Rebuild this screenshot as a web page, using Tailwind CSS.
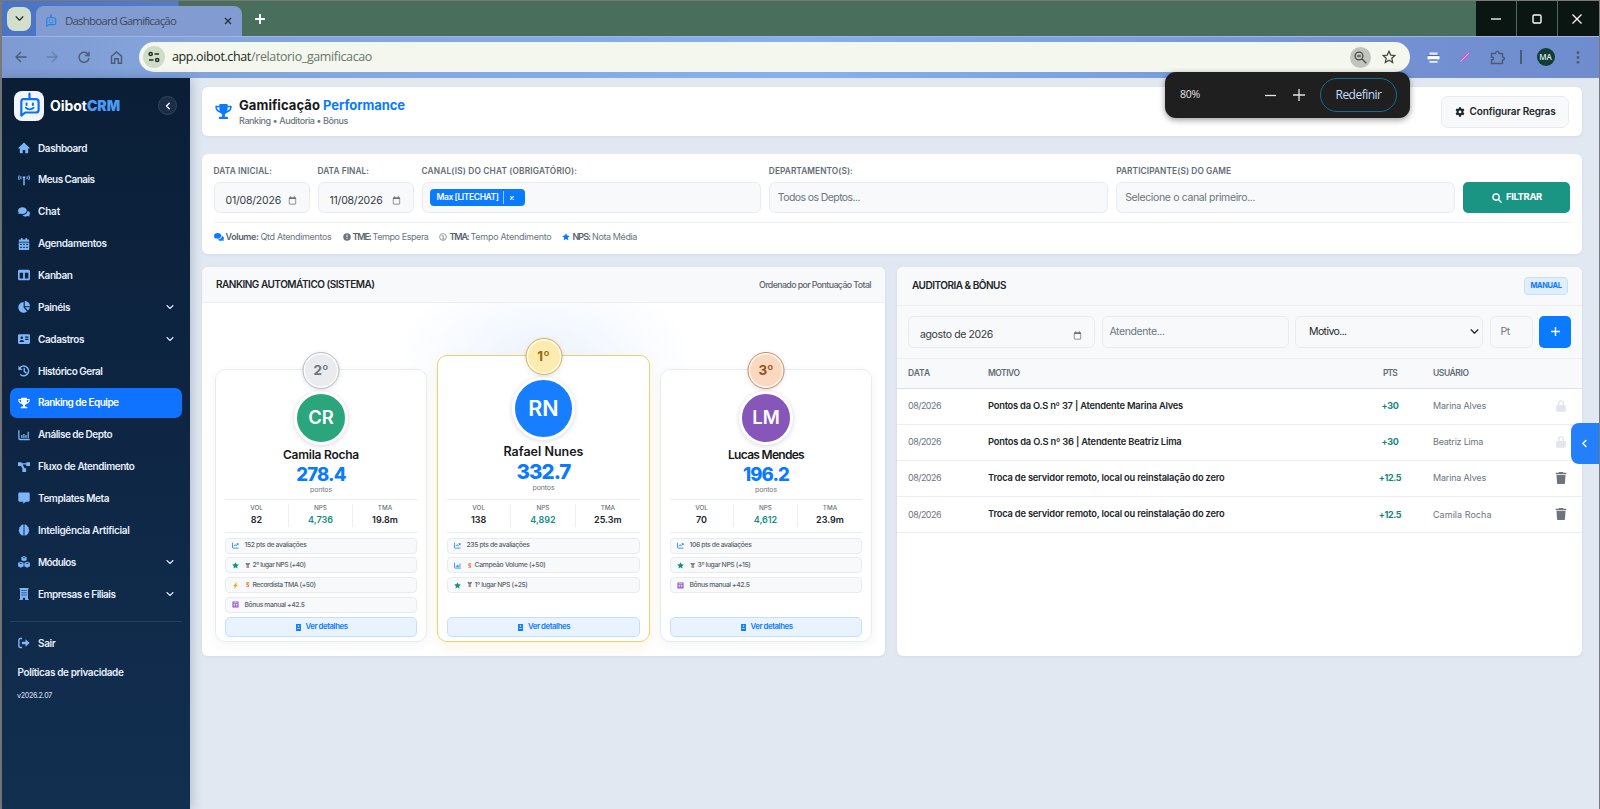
<!DOCTYPE html>
<html lang="pt-BR">
<head>
<meta charset="utf-8">
<title>Dashboard Gamificação</title>
<script src="https://cdn.jsdelivr.net/npm/@tailwindcss/browser@4"></script>
</head>
<body class="h-[809px] w-[1600px] overflow-hidden bg-[#77797b] font-['Inter','Liberation_Sans',sans-serif] text-[#212529]">

<svg class="hidden" aria-hidden="true">
  <symbol id="home" viewBox="0 0 16 16"><path d="M8 .8 .6 7.6c-.5.5-.2 1.1.5 1.1h1.3v5.2c0 .7.4 1.1 1.1 1.1H6.300v-4.200h3.400V15h2.800c.7 0 1.100-.4 1.100-1.100V8.700h1.300c.7 0 1-.6.5-1.100z"/></symbol>
  <symbol id="tower" viewBox="0 0 16 16"><g fill="none" stroke="currentColor" stroke-width="1.500"><path d="M1.800 2C.5 4 .5 6 1.800 8M4.200 3c-.7 1.300-.7 2.700 0 4M14.200 2c1.300 2 1.300 4 0 6M11.800 3c.7 1.300.7 2.700 0 4"/><path d="M8 6v9" stroke-width="2"/></g><circle cx="8" cy="4.800" r="1.800"/></symbol>
  <symbol id="chat" viewBox="0 0 16 16"><path d="M5.900 1.500C2.600 1.500 0 3.600 0 6.200c0 1 .4 2 1.100 2.800-.2.700-.6 1.300-1 1.800.9 0 1.900-.3 2.700-.8.900.5 2 .7 3.100.7 3.200 0 5.800-2 5.800-4.600 0-2.500-2.600-4.600-5.800-4.600z"/><path d="M12.700 6.200c0 3.200-2.900 5.600-6.700 5.700 1 1.300 2.700 2.100 4.600 2.100 1 0 2-.2 2.800-.6.800.4 1.700.7 2.600.6-.4-.5-.8-1.100-1-1.700.6-.7 1-1.600 1-2.500 0-1.600-1.300-3-3.300-3.600z"/></symbol>
  <symbol id="cal" viewBox="0 0 16 16"><path fill-rule="evenodd" d="M4 0h2v2h4V0h2v2h1.500c.8 0 1.500.6 1.500 1.400V5H1V3.400C1 2.600 1.700 2 2.500 2H4zM1 6h14v8.500c0 .8-.7 1.500-1.500 1.500h-11C1.700 16 1 15.300 1 14.500zm2 1.800v1.600h2V7.800zm4 0v1.600h2V7.800zm4 0v1.600h2V7.800zM3 11.700v1.700h2v-1.700zm4 0v1.700h2v-1.700zm4 0v1.700h2v-1.700z"/></symbol>
  <symbol id="kanban" viewBox="0 0 16 16"><path fill-rule="evenodd" d="M2 1h12c1.100 0 2 .9 2 2v10c0 1.100-.9 2-2 2H2c-1.100 0-2-.9-2-2V3c0-1.100.9-2 2-2zm.2 4v7.800h4.600V5zm7 0v7.800h4.600V5z"/></symbol>
  <symbol id="pie" viewBox="0 0 16 16"><path d="M7.500 8.500V1.300C3.600 1.600.5 4.600.5 8.500c0 4 3.200 7 7 7 1.700 0 3.200-.6 4.500-1.600zM9 0v7h7c0-3.900-3.100-7-7-7zM9.300 8.400l4 4.400c1.300-1.100 2.200-2.700 2.400-4.400z"/></symbol>
  <symbol id="idcard" viewBox="0 0 16 16"><path fill-rule="evenodd" d="M1.800 1.500h12.400c1 0 1.800.8 1.800 1.800v9.400c0 1-.8 1.800-1.800 1.800H1.800c-1 0-1.800-.8-1.800-1.800V3.300c0-1 .8-1.800 1.800-1.800zm3.200 3a1.700 1.700 0 1 0 0 3.400 1.700 1.700 0 0 0 0-3.400zM2 12h6c0-1.700-1.100-2.800-3-2.800S2 10.300 2 12zm7.500-7.200v1.400H14V4.800zm0 3v1.400H14V7.800z"/></symbol>
  <symbol id="history" viewBox="0 0 16 16"><path d="M2 4.500A6.500 6.500 0 1 1 3.600 13M8.300 4.500v4l2.500 2" fill="none" stroke="currentColor" stroke-width="1.900" stroke-linecap="round"/><path d="M.6 1v5.600h5.600z"/></symbol>
  <symbol id="trophy" viewBox="0 0 16 16"><path d="M4.200 1h7.600v1.500H15c.5 0 .8.300.8.800 0 3.200-1.900 5.300-5 6-.4.500-.9.900-1.500 1.200V13h2.200c.5 0 .8.300.8.800V15H3.700v-1.200c0-.5.300-.8.800-.8h2.200v-2.500c-.6-.3-1.100-.7-1.500-1.200-3.100-.7-5-2.800-5-6 0-.5.300-.8.800-.8h3.200zM1.800 4c.2 1.700 1 2.800 2.700 3.400-.3-1-.5-2.200-.4-3.400zm12.400 0h-2.300c0 1.200-.1 2.400-.4 3.400 1.700-.6 2.500-1.700 2.700-3.400z"/></symbol>
  <symbol id="chart" viewBox="0 0 16 16"><path d="M1.200 1.500v11c0 .9.500 1.500 1.400 1.500h13" fill="none" stroke="currentColor" stroke-width="1.700"/><path d="M4.200 8h1.700v4H4.200zM7 6.500h1.700V12H7zM9.800 8h1.700v4H9.800zM12.800 3.500h1.700V12h-1.700z"/></symbol>
  <symbol id="line" viewBox="0 0 16 16"><path d="M1.200 1.500v11c0 .9.500 1.500 1.400 1.500H15M4 9.500l3-3.200 2.500 2.300L14 4M10.800 3.800H14V7" fill="none" stroke="currentColor" stroke-width="1.800"/></symbol>
  <symbol id="flow" viewBox="0 0 16 16"><path d="M0 1.500h5v1.600h6V1.500h5v5h-5V4.700H6.200l2.500 4.800h2.100v5h-5v-4.600L4 6.500H0z"/></symbol>
  <symbol id="msg" viewBox="0 0 16 16"><path d="M2 .8h12c.9 0 1.600.7 1.600 1.600v9c0 .9-.7 1.600-1.600 1.600h-3.500L7 15.600V13H2c-.9 0-1.600-.7-1.600-1.600v-9C.4 1.500 1.100.8 2 .8z"/></symbol>
  <symbol id="brain" viewBox="0 0 16 16"><path d="M7.400.8C5.500.3 4 1.500 3.800 3.100 2 3.600 1.300 5 1.800 6.600.6 7.900.8 9.800 1.900 10.800c-.2 1.900 1 3.200 2.400 3.400.8 1.200 2.200 1.400 3.100.8zM8.600.8c1.900-.5 3.400.7 3.600 2.300 1.800.5 2.500 1.900 2 3.500 1.200 1.300 1 3.200-.1 4.200.2 1.900-1 3.200-2.400 3.400-.8 1.200-2.200 1.400-3.100.8z"/></symbol>
  <symbol id="cubes" viewBox="0 0 16 16"><path fill-rule="evenodd" d="M8 0l3.500 1.500v4L8 7.100 4.500 5.500v-4zm0 1.600L6.200 2.400 8 3.200l1.800-.8zM3.800 7.500l3.700 1.600v4.600L3.800 15.600.1 13.700V9.100zm0 1.500-1.900.9 1.900.8 1.900-.8zM12.200 7.500l3.700 1.600v4.600l-3.700 1.900-3.700-1.900V9.100zm0 1.500-1.900.9 1.900.8 1.900-.8z"/></symbol>
  <symbol id="building" viewBox="0 0 16 16"><path fill-rule="evenodd" d="M2 0h12v1.500h-.7v13h.9V16H9.500v-3h-3v3H1.800v-1.500h.9v-13H2zm2.800 2.600v1.500h1.600V2.600zm2.500 0v1.500h1.500V2.600zm2.500 0v1.500h1.600V2.600zm-5 3v1.500h1.600V5.600zm2.500 0v1.500h1.500V5.600zm2.500 0v1.500h1.600V5.600zm-5 3v1.500h1.600V8.600zm2.500 0v1.500h1.500V8.600zm2.500 0v1.500h1.600V8.600z"/></symbol>
  <symbol id="exit" viewBox="0 0 16 16"><path d="M5.500 2H3.200C2 2 1.200 2.800 1.200 4v8c0 1.200.8 2 2 2h2.300" fill="none" stroke="currentColor" stroke-width="1.900"/><path d="M10 3l5.600 5-5.600 5v-3.200H5.200V6.200H10z"/></symbol>
  <symbol id="star" viewBox="0 0 16 16"><path d="M8 .3l2.300 4.800 5.300.7-3.900 3.700 1 5.200L8 12.200l-4.700 2.500 1-5.200L.4 5.800l5.300-.7z"/></symbol>
  <symbol id="gear" viewBox="0 0 16 16"><path fill-rule="evenodd" d="M6.400.4h3.200l.4 2.100 1.300.8 2.100-.8 1.600 2.800-1.600 1.500v1.900l1.600 1.500-1.600 2.800-2.100-.8-1.300.8-.4 2.600H6.400L6 13l-1.300-.8-2.100.8L1 10.200l1.600-1.500V6.800L1 5.300l1.600-2.800 2.100.8L6 2.500zM8 5.500a2.300 2.300 0 1 0 0 4.600 2.300 2.300 0 0 0 0-4.600z"/></symbol>
  <symbol id="search" viewBox="0 0 16 16"><g fill="none" stroke="currentColor" stroke-width="2.200" stroke-linecap="round"><circle cx="6.500" cy="6.500" r="5"/><path d="M10.300 10.300l4.400 4.400"/></g></symbol>
  <symbol id="date" viewBox="0 0 16 16"><path fill-rule="evenodd" d="M4 .5h1.600V2h4.800V.5H12V2h1c.8 0 1.500.7 1.500 1.500v10c0 .8-.7 1.500-1.500 1.500H3c-.8 0-1.500-.7-1.500-1.500v-10C1.500 2.700 2.200 2 3 2h1zM2.800 5.500v8.200h10.400V5.500z"/></symbol>
  <symbol id="down" viewBox="0 0 16 16"><path d="M2 5l6 6 6-6" fill="none" stroke="currentColor" stroke-width="2.300" stroke-linecap="round" stroke-linejoin="round"/></symbol>
  <symbol id="left" viewBox="0 0 16 16"><path d="M10.500 2.500L5 8l5.500 5.500" fill="none" stroke="currentColor" stroke-width="2.600" stroke-linecap="round" stroke-linejoin="round"/></symbol>
  <symbol id="info" viewBox="0 0 16 16"><path fill-rule="evenodd" d="M8 .5a7.500 7.500 0 1 0 0 15 7.500 7.500 0 0 0 0-15zM7 3.500h2v5.200H7zm0 6.500h2v2H7z"/></symbol>
  <symbol id="clock" viewBox="0 0 16 16"><g fill="none" stroke="currentColor" stroke-width="1.400"><circle cx="8" cy="8" r="6.800"/><path d="M5 5.500h3.500V12M6 12h5"/></g></symbol>
  <symbol id="lock" viewBox="0 0 16 16"><path fill-rule="evenodd" d="M4 6.500V4.200a4 4 0 0 1 8 0v2.300h1c.9 0 1.500.6 1.500 1.500v6c0 .9-.6 1.500-1.500 1.500H3c-.9 0-1.500-.6-1.500-1.500V8c0-.9.600-1.500 1.500-1.500zm1.900 0h4.200V4.200a2.100 2.100 0 0 0-4.200 0z"/></symbol>
  <symbol id="trash" viewBox="0 0 16 16"><path d="M5.500 0h5l.6 1H15v2H1V1h3.900zM2 4h12l-.7 10.600c0 .8-.6 1.400-1.400 1.400H4.100c-.8 0-1.400-.6-1.400-1.400z"/></symbol>
  <symbol id="bolt" viewBox="0 0 16 16"><path d="M11.500 0L2.500 9h4L4.500 16l9-9.500h-4z"/></symbol>
  <symbol id="note" viewBox="0 0 16 16"><path fill-rule="evenodd" d="M1 1h14v14H1zm2.500 2.500v1.500h9V3.500zm0 3.500v1.500h3.800V7zm5.200 0v1.500h3.800V7zM3.500 10.500V12h3.800v-1.500zm5.200 0V12h3.800v-1.500z"/></symbol>
  <symbol id="receipt" viewBox="0 0 16 16"><path fill-rule="evenodd" d="M2.500 0h11v16h-11zm4 3v3h3V3zM5 9v1.600h6V9z"/></symbol>
  <symbol id="medal" viewBox="0 0 16 16"><path d="M1 0h5l2 4 2-4h5l-4.500 8h-5z" fill="#3b7ddd"/><path d="M6 0h4L8 4z" fill="#d9534f"/><circle cx="8" cy="11.500" r="4.200" fill="#e08a3c"/></symbol>
  <symbol id="fire" viewBox="0 0 16 16"><path d="M4 1h8v3H7v2.500c3-.5 5 1.300 5 4S10 15.500 7 15.500H4v-3h3c1.300 0 2-.6 2-1.600S8.300 9.300 7 9.300H4z" fill="#f47a35"/></symbol>
  <symbol id="bot" viewBox="0 0 32 32"><path d="M16 2v6" stroke="#0b6cf5" stroke-width="2.600" stroke-linecap="round"/><path d="M8.500 8.500h15c2 0 3.300 1.300 3.300 3.300V21c0 2-1.300 3.300-3.300 3.300H11L6.300 28V11.800c0-2 .7-3.300 2.200-3.300z" fill="none" stroke="currentColor" stroke-width="2.600" stroke-linejoin="round"/><path d="M12.500 13.500v2M20 13.500v2" stroke="currentColor" stroke-width="2.400" stroke-linecap="round"/><path d="M11.500 18.500c2.500 2.800 7 2.800 9.500 0" fill="none" stroke="currentColor" stroke-width="2" stroke-linecap="round"/></symbol>
</svg>

<div class="flex h-full w-full flex-col pt-[1px] pr-[1px] pl-[2px]">

  <!-- Browser tab strip -->
  <header class="relative flex h-[35px] shrink-0 items-stretch bg-[linear-gradient(90deg,#4a74c4_0,#557bc8_176px,#4a6e5c_177px)] font-['Open_Sans','Noto_Sans',sans-serif]">
    <div class="flex w-[34px] items-center pl-[5px]">
      <button class="flex size-6 items-center justify-center rounded-[8px] bg-[#d2e0cb] text-[#26322c]"><svg class="size-[9px]"><use href="#down"/></svg></button>
    </div>
    <div class="mt-[5px] flex w-[206px] items-center rounded-t-[8px] bg-[#829cd2] pl-[8px] text-[#3c4a5e]">
      <svg class="size-[14px] text-[#1c84ea]"><use href="#bot"/></svg>
      <span data-w="111" class="ml-[7px] text-[11.500px]">Dashboard Gamificação</span>
      <svg class="mr-[10px] ml-auto size-[8px] text-[#222c3a]" viewBox="0 0 8 8"><path d="M1 1l6 6M7 1l-6 6" stroke="currentColor" stroke-width="1.200"/></svg>
    </div>
    <svg class="ml-[12px] size-[12px] self-center text-white" viewBox="0 0 12 12"><path d="M6 1v10M1 6h10" stroke="currentColor" stroke-width="1.800"/></svg>
    <div class="ml-auto flex gap-[1px] text-white">
      <div class="flex w-[40px] items-center justify-center bg-[#0b1512]"><svg class="size-[10px]" viewBox="0 0 10 10"><path d="M0 5h10" stroke="currentColor" stroke-width="1.300"/></svg></div>
      <div class="flex w-[40px] items-center justify-center bg-[#0b1512] pr-[1px]"><svg class="size-[10px]" viewBox="0 0 10 10"><rect x="1" y="1" width="8" height="8" rx="1.200" fill="none" stroke="currentColor" stroke-width="1.400"/></svg></div>
      <div class="flex w-[41px] items-center justify-center bg-[#0b1512] pr-[3px]"><svg class="size-[10px]" viewBox="0 0 10 10"><path d="M.5 .5l9 9M9.500 .5l-9 9" stroke="currentColor" stroke-width="1.300"/></svg></div>
    </div>
  </header>

  <!-- Address bar -->
  <div class="relative flex h-[42px] shrink-0 items-center border-t border-[#9fb6e4] bg-[linear-gradient(90deg,#7f9ad2_0,#82a2da_8%,#86b0ee_50%,#7290d2_88%,#6f8ccf_100%)] pb-[1px] font-['Open_Sans','Noto_Sans',sans-serif] text-[#4c5b75]">
    <svg class="ml-[13px] size-[12px]" viewBox="0 0 12 12"><path d="M11.500 6H1M6 1L1 6l5 5" fill="none" stroke="currentColor" stroke-width="1.400"/></svg>
    <svg class="ml-[19px] size-[12px] text-[#6880ae]" viewBox="0 0 12 12"><path d="M.5 6H11M6 1l5 5-5 5" fill="none" stroke="currentColor" stroke-width="1.400"/></svg>
    <svg class="ml-[20px] size-[12px]" viewBox="0 0 12 12"><path d="M10.500 4A5 5 0 1 0 11 6.800M11 .8v3.700H7.200" fill="none" stroke="currentColor" stroke-width="1.400"/></svg>
    <svg class="ml-[20px] size-[13px]" viewBox="0 0 13 13"><path d="M1.500 5.200l5-4.200 5 4.200v7h-3.200V7.800H4.700v4.400H1.500z" fill="none" stroke="currentColor" stroke-width="1.400"/></svg>
    <div class="ml-[16px] flex h-[30px] w-[1271px] items-center rounded-full bg-[#f3f7ee] pl-[4px] text-[#202622]">
      <span class="flex size-[22px] items-center justify-center rounded-full bg-[#cfdcc8]"><svg class="size-[12px]" viewBox="0 0 12 12"><g fill="none" stroke="#26302a" stroke-width="1.500"><circle cx="2.700" cy="3" r="1.600"/><path d="M6.500 3H11M1 9h4.500"/><circle cx="9.200" cy="9" r="1.600"/></g></svg></span>
      <span data-w="200" class="ml-[7px] text-[12.500px] whitespace-pre">app.oibot.chat<i class="text-[#6c746c] not-italic">/relatorio_gamificacao</i></span>
      <span class="ml-auto flex size-[21px] items-center justify-center rounded-full bg-[#c0c3be] text-[#454b46]"><svg class="size-[13px]" viewBox="0 0 13 13"><g fill="none" stroke="currentColor" stroke-width="1.300"><circle cx="5" cy="5" r="3.900"/><path d="M8 8l4.300 4.300M3.200 5h3.600"/></g></svg></span>
      <svg class="mr-[14px] ml-[11px] size-[14px] text-[#3c423e]" viewBox="0 0 16 16"><path d="M8 1.500l2 4.300 4.700.5-3.500 3.200 1 4.700L8 11.800l-4.200 2.400 1-4.700L1.300 6.300 6 5.800z" fill="none" stroke="currentColor" stroke-width="1.400"/></svg>
    </div>
    <svg class="ml-[17px] size-[13px]" viewBox="0 0 13 13"><path d="M2.500 1.500h8v2.300h-8zM2.500 9.500h8v2.300h-8z" fill="#e8effa"/><rect x=".5" y="4.800" width="12" height="3.700" rx="1" fill="#fff"/><path d="M.5 4.600h12M2.500 9h8" stroke="#3f5f9c" stroke-width=".9"/></svg>
    <svg class="ml-[19px] size-[12px]" viewBox="0 0 12 12"><path d="M1 11C2 6 6 2 11.500.8 10 5.500 6.500 9 1 11z" fill="#c060dc"/><path d="M1.500 10.500L10 2" stroke="#f2dcff" stroke-width=".8"/></svg>
    <svg class="ml-[19px] size-[15px]" viewBox="0 0 15 15"><path d="M1.500 3.500h4c0-2.800 3.500-2.800 3.500 0h3.500V7c2.500 0 2.500 3 0 3v3.500h-11V10c2.600 0 2.600-3 0-3z" fill="none" stroke="currentColor" stroke-width="1.400"/></svg>
    <i class="ml-[15px] h-[14px] w-[1.500px] bg-[#4c5b75]"></i>
    <span class="ml-[15px] flex size-[18px] items-center justify-center rounded-full bg-[#123c35] text-[8px] font-semibold text-[#dfeee8]">MA</span>
    <svg class="ml-[21px] h-[13px] w-[4px]" viewBox="0 0 4 13"><g fill="currentColor"><circle cx="2" cy="1.700" r="1.400"/><circle cx="2" cy="6.500" r="1.400"/><circle cx="2" cy="11.300" r="1.400"/></g></svg>

    <!-- Zoom popup -->
    <div class="absolute top-[35px] left-[1163px] z-20 flex h-[46px] w-[245px] items-center rounded-[11px] bg-[#1f1f1f] pl-[15px] text-[#e3e3e3] shadow-[0_2px_6px_rgba(0,0,0,.4)]">
      <span data-w="20" class="text-[10.500px]">80%</span>
      <svg class="ml-[65px] size-[11px]" viewBox="0 0 11 11"><path d="M0 5.500h11" stroke="currentColor" stroke-width="1.300"/></svg>
      <svg class="ml-[17px] size-[12px]" viewBox="0 0 12 12"><path d="M0 6h12M6 0v12" stroke="currentColor" stroke-width="1.300"/></svg>
      <span class="ml-[15px] flex h-[34px] w-[77px] items-center justify-center rounded-full border border-[#146a9a] text-[12px] text-[#c6dcfb]"><span data-w="46">Redefinir</span></span>
    </div>
  </div>

  <div class="flex min-h-0 flex-1">

    <!-- Sidebar -->
    <aside class="z-10 flex w-[188px] shrink-0 flex-col bg-[linear-gradient(180deg,#0a1e36_0%,#0e2644_50%,#122f50_100%)] px-[8px] shadow-[2px_0_10px_rgba(15,35,65,.22)]">
      <div class="flex h-[55px] items-center">
        <span class="ml-[4px] flex size-[30px] items-center justify-center rounded-[8px] bg-[#f2f6fc] text-[#0b72f5]"><svg class="size-[27px]"><use href="#bot"/></svg></span>
        <span data-w="70" class="ml-[6px] text-[14px] font-bold text-white">Oibot<b class="text-[#4a9bf5]">CRM</b></span>
        <span class="mr-[5px] ml-auto flex size-[19px] items-center justify-center rounded-full border border-[#33455d] bg-[#1b2d47] text-white"><svg class="size-[8px]"><use href="#left"/></svg></span>
      </div>
      <nav id="nav" class="flex flex-col gap-[1.860px]"></nav>
      <hr class="mt-[12px] border-[#27405f]">
      <div class="mt-[6px] flex h-[30px] items-center px-[8px] text-[10px] font-semibold text-[#e6eefa]"><svg class="mr-[8px] size-[12px] fill-current text-[#7db5f8]"><use href="#exit"/></svg><span data-w="17.500">Sair</span></div>
      <div class="mt-[6px] pl-[7.500px] text-[10px] leading-[16px] font-semibold text-[#e6eefa]"><span data-w="106">Políticas de privacidade</span></div>
      <div class="mt-[11px] pl-[7px] text-[7px] leading-[10px] font-medium text-[#c4d2e4]"><span data-w="35">v2026.2.07</span></div>
    </aside>

    <!-- Page -->
    <main class="flex flex-1 flex-col bg-[#e1e8f2] pt-[9px] pr-[17px] pl-[12px]">
      <section class="flex h-[49px] shrink-0 items-center rounded-[6px] bg-white px-[13px] shadow-[0_1px_3px_rgba(40,60,100,.08)]">
        <svg class="size-[17px] fill-[#0a7bff]"><use href="#trophy"/></svg>
        <div class="ml-[7px]">
          <h1 class="flex gap-[3px] text-[13px] leading-[17px] font-bold text-[#17191c]"><span data-w="81">Gamificação</span><span data-w="82" class="text-[#0a7bff]">Performance</span></h1>
          <p class="text-[9px] leading-[13px] font-medium text-[#6c757d]"><span data-w="109">Ranking • Auditoria • Bônus</span></p>
        </div>
        <button class="ml-auto flex h-[32px] w-[128px] items-center justify-center gap-[5px] rounded-[7px] border border-[#e9ecf0] bg-[#f8f9fa] text-[10px] font-semibold text-[#212529]"><svg class="size-[10px] fill-current"><use href="#gear"/></svg><span data-w="86">Configurar Regras</span></button>
      </section>

      <section class="mt-[18px] h-[100px] shrink-0 rounded-[6px] bg-white px-[11.500px] pt-[11px] shadow-[0_1px_3px_rgba(40,60,100,.08)]">
        <div class="flex items-end gap-[8px] text-[10.500px] text-[#6c757d] [&_label]:mb-[5px] [&_label]:flex [&_label]:h-[12px] [&_label]:items-center [&_label]:text-[8.300px] [&_label]:font-semibold [&_label]:text-[#626b75]">
          <div class="w-[96px]"><label><span data-w="58.500">DATA INICIAL:</span></label><div class="flex h-[31px] items-center rounded-[6px] border border-[#e9ecef] bg-[#f8f9fa] pt-[6px] pl-[11px] text-[#343a40]"><span data-w="55.500">01/08/2026</span><svg class="ml-[7px] size-[9px] fill-[#6b7178]"><use href="#date"/></svg></div></div>
          <div class="w-[96px]"><label><span data-w="51.500">DATA FINAL:</span></label><div class="flex h-[31px] items-center rounded-[6px] border border-[#e9ecef] bg-[#f8f9fa] pt-[6px] pl-[11px] text-[#343a40]"><span data-w="53">11/08/2026</span><svg class="ml-[9px] size-[9px] fill-[#6b7178]"><use href="#date"/></svg></div></div>
          <div class="flex-1"><label><span data-w="155.500">CANAL(IS) DO CHAT (OBRIGATÓRIO):</span></label><div class="flex h-[31px] items-center rounded-[6px] border border-[#e9ecef] bg-[#f8f9fa] pl-[7px]"><span class="flex h-[17px] w-[95px] items-center rounded-[4px] bg-[#0a7bff] pl-[7px] text-[8.500px] font-semibold text-white"><span data-w="62">Max [LITECHAT]</span><i class="ml-[4px] h-[13px] w-px bg-white/60"></i><svg class="ml-[6px] size-[4px]" viewBox="0 0 4 4"><path d="M0 0l4 4M4 0L0 4" stroke="#fff" stroke-width="1.200"/></svg></span></div></div>
          <div class="flex-1"><label><span data-w="84">DEPARTAMENTO(S):</span></label><div class="flex h-[31px] items-center rounded-[6px] border border-[#e9ecef] bg-[#f8f9fa] pl-[8px]"><span data-w="82">Todos os Deptos...</span></div></div>
          <div class="flex-1"><label><span data-w="115">PARTICIPANTE(S) DO GAME</span></label><div class="flex h-[31px] items-center rounded-[6px] border border-[#e9ecef] bg-[#f8f9fa] pl-[8px]"><span data-w="130">Selecione o canal primeiro...</span></div></div>
          <button class="flex h-[31px] w-[107px] items-center justify-center gap-[4px] rounded-[5px] bg-[#1a9583] text-[9.500px] font-bold text-white"><svg class="size-[10px]"><use href="#search"/></svg><span data-w="36">FILTRAR</span></button>
        </div>
        <div class="mt-[9px] flex h-[28px] items-center border-t border-[#eef0f2] text-[9px] text-[#6c757d] [&_b]:font-semibold [&_b]:text-[#5a636c]">
          <svg class="size-[10px] fill-[#0a7bff]"><use href="#chat"/></svg><b class="mr-[2px] ml-[2px]" data-w="33">Volume:</b><span data-w="71">Qtd Atendimentos</span>
          <svg class="ml-[11px] size-[8px] fill-current"><use href="#info"/></svg><b class="mr-[2px] ml-[2px]" data-w="18">TME:</b><span data-w="56">Tempo Espera</span>
          <svg class="ml-[10px] size-[8px]"><use href="#clock"/></svg><b class="mr-[2px] ml-[3px]" data-w="19">TMA:</b><span data-w="81">Tempo Atendimento</span>
          <svg class="ml-[10px] size-[8px] fill-[#0a7bff]"><use href="#star"/></svg><b class="mr-[2px] ml-[3px]" data-w="17.500">NPS:</b><span data-w="45">Nota Média</span>
        </div>
      </section>

      <div class="mt-[13px] flex h-[389px] shrink-0 gap-[12px]">
        <section class="flex w-[683px] flex-col overflow-hidden rounded-[6px] bg-white shadow-[0_1px_3px_rgba(40,60,100,.08)]">
          <div class="flex h-[36px] shrink-0 items-center justify-between border-b border-[#eceef1] bg-[#f8f9fa] px-[14px]">
            <h2 class="text-[10px] font-semibold"><span data-w="158.500">RANKING AUTOMÁTICO (SISTEMA)</span></h2>
            <span data-w="112" class="text-[8.800px] font-medium text-[#5c656e]">Ordenado por Pontuação Total</span>
          </div>
          <div id="podium" class="flex flex-1 items-end gap-[10px] bg-[radial-gradient(ellipse_150px_75px_at_50%_14%,#edf4ff_0%,rgba(255,255,255,0)_100%)] px-[13px] pb-[14px]"></div>
        </section>

        <section class="flex flex-1 flex-col overflow-hidden rounded-[6px] bg-white shadow-[0_1px_3px_rgba(40,60,100,.08)]">
          <div class="flex h-[38.500px] shrink-0 items-center justify-between border-b border-[#eceef1] bg-[#f8f9fa] pr-[14px] pl-[15px]">
            <h2 class="text-[10px] font-semibold"><span data-w="94">AUDITORIA &amp; BÔNUS</span></h2>
            <span class="flex h-[18px] w-[44px] items-center justify-center rounded-[4px] border border-[#c9e0fb] bg-[#e0eefd] text-[7.500px] font-bold text-[#0a7bff]"><span data-w="31">MANUAL</span></span>
          </div>
          <div class="grid h-[53px] shrink-0 grid-cols-[187px_187px_188px_43px_32px] content-center items-center gap-[6.500px] border-b border-[#eceef1] bg-[#f8f9fa] px-[11px] text-[10.500px] text-[#6c757d] [&>div]:flex [&>div]:h-[32px] [&>div]:items-center [&>div]:rounded-[6px] [&>div]:border [&>div]:border-[#e9ecef]">
            <div class="pt-[7px] pr-[12px] pl-[11px] text-[#343a40]"><span data-w="73">agosto de 2026</span><svg class="ml-auto size-[9px] fill-[#6b7178]"><use href="#date"/></svg></div>
            <div class="pl-[7px]"><span data-w="55">Atendente...</span></div>
            <div class="pr-[3px] pl-[13px] text-[#212529]"><span data-w="37.500">Motivo...</span><svg class="ml-auto size-[9px]"><use href="#down"/></svg></div>
            <div class="pl-[10px]"><span data-w="9">Pt</span></div>
            <button class="flex size-[32px] items-center justify-center rounded-[5px] bg-[#0a7bff]"><svg class="size-[9px]" viewBox="0 0 9 9"><path d="M4.500 0v9M0 4.500h9" stroke="#fff" stroke-width="1.400"/></svg></button>
          </div>
          <div class="grid h-[30px] shrink-0 grid-cols-[80px_366px_72px_107px_1fr] items-center border-b border-[#dee2e8] bg-[#f8f9fa] pl-[11px] text-[8.500px] font-semibold text-[#626b75]">
            <span><span data-w="22">DATA</span></span><span><span data-w="31.500">MOTIVO</span></span><span class="text-center"><span data-w="14">PTS</span></span><span class="pl-[7px]"><span data-w="35.500">USUÁRIO</span></span>
          </div>
          <div id="rows"></div>
        </section>
      </div>
    </main>
  </div>
</div>

<button class="absolute top-[423px] left-[1571px] z-10 flex h-[41px] w-[28px] items-center justify-center rounded-l-[8px] bg-[#2480fa] text-white"><svg class="mr-[2px] size-[9px]"><use href="#left"/></svg></button>

<script>
const nav = [
  ['home','Dashboard',49],['tower','Meus Canais',56.5],['chat','Chat',22],['cal','Agendamentos',68.5],
  ['kanban','Kanban',34.5],['pie','Painéis',32,1],['idcard','Cadastros',46,1],['history','Histórico Geral',64.5],
  ['trophy','Ranking de Equipe',80.5],['chart','Análise de Depto',74],['flow','Fluxo de Atendimento',96.5],
  ['msg','Templates Meta',71],['brain','Inteligência Artificial',91.5],['cubes','Módulos',37.5,1],['building','Empresas e Filiais',77.5,1]
];
document.getElementById('nav').innerHTML = nav.map(([ic, t, w, more]) => {
  const on = t === 'Ranking de Equipe';
  return `<a class="flex h-[30px] items-center rounded-[7px] px-[8px] text-[10px] font-semibold ${on ? 'bg-[#0f73ff] text-white' : 'text-[#e6eefa]'}">
    <svg class="mr-[8px] size-[12px] fill-current ${on ? 'text-white' : 'text-[#7db5f8]'}"><use href="#${ic}"/></svg><span data-w="${w}">${t}</span>
    ${more ? '<svg class="ml-auto size-[8px] text-[#dbe6f5]"><use href="#down"/></svg>' : ''}</a>`;
}).join('');

const people = [
  { pos:'2º', ini:'CR', name:'Camila Rocha', nw:76, pts:'278.4', pw:49.5, vol:'82', nps:'4,736', tma:'19.8m',
    badge:'border-[#b9bec9] bg-[#e9ebef] text-[#6f757d]', av:'bg-[#2aa57c]',
    items:[['line','text-[#0a7bff]','','152 pts de avaliações',62],['star','text-[#14907f]','medal','2º lugar NPS (+40)',53],['bolt','text-[#f5a31a]','fire','Recordista TMA (+50)',63],['note','text-[#9257cf]','','Bônus manual +42.5',60]] },
  { pos:'1º', ini:'RN', name:'Rafael Nunes', nw:80, pts:'332.7', pw:54, vol:'138', nps:'4,892', tma:'25.3m', top:true,
    badge:'border-[#e3b23c] bg-[#fdebb0] text-[#94690a]', av:'bg-[#177fff]',
    items:[['line','text-[#0a7bff]','','235 pts de avaliações',63],['chart','text-[#0a7bff]','fire','Campeão Volume (+50)',71],['star','text-[#14907f]','medal','1º lugar NPS (+25)',53]] },
  { pos:'3º', ini:'LM', name:'Lucas Mendes', nw:76, pts:'196.2', pw:46, vol:'70', nps:'4,612', tma:'23.9m',
    badge:'border-[#d58a5c] bg-[#fbd9c0] text-[#96501c]', av:'bg-[#8756b9]',
    items:[['line','text-[#0a7bff]','','106 pts de avaliações',62],['star','text-[#14907f]','medal','3º lugar NPS (+15)',53],['note','text-[#9257cf]','','Bônus manual +42.5',60]] }
];
document.getElementById('podium').innerHTML = people.map(p => `
  <article class="relative flex flex-col items-center rounded-[10px] border bg-white px-[9px] ${p.top ? 'h-[287px] w-[213px] border-[#f0cd74] pt-[21px] shadow-[0_5px_14px_rgba(240,190,70,.16)]' : 'h-[273px] w-[212px] border-[#e9ecef] pt-[21px] shadow-[0_3px_10px_rgba(40,60,100,.06)]'}">
    <span class="absolute -top-[18px] left-1/2 flex size-[37px] -translate-x-1/2 items-center justify-center rounded-full border text-[13.500px] font-bold shadow-[inset_0_0_0_1.500px_#fff,0_1px_4px_rgba(40,60,100,.15)] ${p.badge}">${p.pos}</span>
    <span class="flex shrink-0 items-center justify-center rounded-full border-white font-semibold text-white shadow-[0_1px_5px_rgba(40,60,100,.2)] ${p.av} ${p.top ? 'size-[63px] border-[3px] text-[21.500px]' : 'size-[54px] border-[3px] text-[18.500px]'}">${p.ini}</span>
    <h3 class="font-semibold text-[#17191c] ${p.top ? 'mt-[3px] text-[12.500px] leading-[18px]' : 'mt-[1px] text-[12px] leading-[18px]'}"><span data-w="${p.nw}">${p.name}</span></h3>
    <strong class="font-extrabold text-[#0a7bff] ${p.top ? 'text-[20.500px] leading-[22px]' : 'text-[18.500px] leading-[21px]'}"><span data-w="${p.pw}">${p.pts}</span></strong>
    <small class="text-[7px] leading-[9px] text-[#6c757d]"><span data-w="22">pontos</span></small>
    <div class="mt-auto grid h-[34px] w-full shrink-0 grid-cols-3 items-center divide-x divide-[#eceef1] border-y border-[#e9ecef] text-center [&>div]:h-[23px]">
      <div><p class="text-[6.300px] leading-[9px] font-medium text-[#6c757d]">VOL</p><p class="text-[9px] leading-[13px] font-semibold">${p.vol}</p></div>
      <div><p class="text-[6.300px] leading-[9px] font-medium text-[#6c757d]">NPS</p><p class="text-[9px] leading-[13px] font-semibold text-[#14907f]">${p.nps}</p></div>
      <div><p class="text-[6.300px] leading-[9px] font-medium text-[#6c757d]">TMA</p><p class="text-[9px] leading-[13px] font-semibold">${p.tma}</p></div>
    </div>
    <div class="mt-[5px] flex h-[79.500px] w-full shrink-0 flex-col gap-[3.800px]">
      ${p.items.map(([ic, c, em, t, w]) => `<div class="flex h-[16px] items-center rounded-[4px] border border-[#e9ecef] bg-[#f8f9fa] pl-[6px] text-[6.800px] font-medium text-[#5a636c]">
        <svg class="size-[7px] shrink-0 fill-current ${c}"><use href="#${ic}"/></svg>${em ? `<svg class="ml-[6px] size-[5.500px] shrink-0"><use href="#${em}"/></svg><span class="ml-[2px]" data-w="${w}">${t}</span>` : `<span class="ml-[5.500px]" data-w="${w}">${t}</span>`}</div>`).join('')}
    </div>
    <button class="mb-[4px] flex h-[20px] w-full shrink-0 items-center justify-center gap-[4px] rounded-[5px] border border-[#c5dffb] bg-[#e9f3fe] text-[7.800px] font-semibold text-[#0a7bff]"><svg class="size-[7px] fill-current"><use href="#receipt"/></svg><span data-w="42">Ver detalhes</span></button>
  </article>`).join('');

const rows = [
  ['Pontos da O.S nº 37 | Atendente Marina Alves',195,'+30',17,'Marina Alves',53,'lock'],
  ['Pontos da O.S nº 36 | Atendente Beatriz Lima',193.5,'+30',17,'Beatriz Lima',50,'lock'],
  ['Troca de servidor remoto, local ou reinstalação do zero',236.5,'+12.5',22.5,'Marina Alves',53,'trash'],
  ['Troca de servidor remoto, local ou reinstalação do zero',236.5,'+12.5',22.5,'Camila Rocha',58.5,'trash']
];
document.getElementById('rows').innerHTML = rows.map(([m, mw, p, pw, u, uw, ic]) => `
  <div class="grid h-[36.100px] grid-cols-[80px_366px_72px_107px_1fr] items-center border-b border-[#eceef1] pl-[11px] text-[9px] text-[#6c757d]">
    <span><span data-w="33">08/2026</span></span>
    <span class="text-[9.300px] font-semibold text-[#212529]"><span data-w="${mw}">${m}</span></span>
    <span class="text-center font-bold text-[#14857a]"><span data-w="${pw}">${p}</span></span>
    <span class="pl-[7px]"><span data-w="${uw}">${u}</span></span>
    <svg class="ml-[22px] size-[12px] ${ic === 'lock' ? 'fill-[#e4e5ea]' : 'fill-[#6c757d]'}"><use href="#${ic}"/></svg>
  </div>`).join('');

function track() {
  const els = [...document.querySelectorAll('[data-w]')];
  els.forEach(el => { el.style.letterSpacing = '0'; el.style.whiteSpace = 'pre'; el.style.flexShrink = 0; });
  const widths = els.map(el => {
    const r = document.createRange();
    r.selectNodeContents(el);
    return r.getBoundingClientRect().width;
  });
  els.forEach((el, i) => {
    el.style.letterSpacing = ((el.dataset.w - widths[i]) / el.textContent.length) + 'px';
  });
}
new ResizeObserver(track).observe(document.body);
window.addEventListener('load', track);
document.fonts.ready.then(track);
</script>
</body>
</html>
